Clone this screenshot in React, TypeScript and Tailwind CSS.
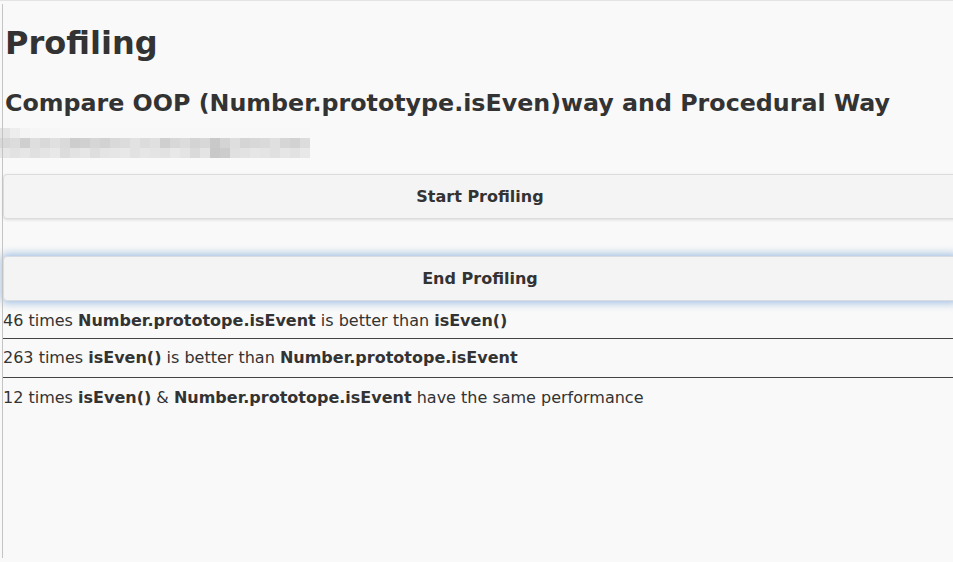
const blurRows: string[][] = [
  ["#e4e4e4", "#ededed", "#f4f4f4", "#f6f6f6", "#f7f7f7", "#f7f7f7", "#f8f8f8", "#f8f8f8", "#f8f8f8", "#f8f8f8", "#f8f8f8", "#f8f8f8", "#f8f8f8", "#f8f8f8", "#f8f8f8", "#f8f8f8", "#f8f8f8", "#f8f8f8", "#f8f8f8", "#f8f8f8", "#f8f8f8", "#f8f8f8", "#f8f8f8", "#f8f8f8", "#f8f8f8", "#f8f8f8", "#f8f8f8", "#f8f8f8", "#f8f8f8", "#f8f8f8", "#f8f8f8"],
  ["#d8d8d8", "#dcdcdc", "#cfcfcf", "#dedede", "#d9d9d9", "#e0e0e0", "#dadada", "#cdcdcd", "#d0d0d0", "#d6d6d6", "#d2d2d2", "#d9d9d9", "#dcdcdc", "#e2e2e2", "#dcdcdc", "#e0e0e0", "#cfcfcf", "#d8d8d8", "#dcdcdc", "#d4d4d4", "#d8d8d8", "#c9c9c9", "#d4d4d4", "#dedede", "#d5d5d5", "#d8d8d8", "#dadada", "#e0e0e0", "#d6d6d6", "#d2d2d2", "#dcdcdc"],
  ["#e6e6e6", "#e2e2e2", "#e6e6e6", "#e0e0e0", "#e4e4e4", "#e8e8e8", "#dcdcdc", "#e2e2e2", "#e6e6e6", "#dedede", "#e4e4e4", "#e6e6e6", "#e8e8e8", "#e2e2e2", "#e6e6e6", "#e4e4e4", "#e2e2e2", "#e8e8e8", "#e4e4e4", "#dadada", "#e4e4e4", "#c8c8c8", "#cccccc", "#e0e0e0", "#e2e2e2", "#e6e6e6", "#e4e4e4", "#e0e0e0", "#e6e6e6", "#e2e2e2", "#e8e8e8"],
];

export default function App() {
  return (
    <div className="relative min-h-[562px] overflow-hidden bg-[#f9f9f9] text-[#333] font-['DejaVu_Sans',sans-serif]">
      {/* window edges */}
      <div className="absolute left-[2px] top-[4px] bottom-[4px] w-px bg-[#c4c4c4]" />
      <div className="absolute left-0 right-0 top-0 h-px bg-[#e4e4e4]" />

      <h1 className="pt-[25px] pl-[5px] text-[32px] font-bold leading-[37px]">Profiling</h1>
      <h2 className="mt-[27px] pl-[5px] text-[23.75px] font-bold leading-[28px]">
        Compare OOP (Number.prototype.isEven)way and Procedural Way
      </h2>

      {/* redacted line */}
      <div className="mt-[11px] flex flex-col">
        {blurRows.map((row, r) => (
          <div key={r} className="flex h-[10px]">
            {row.map((c, i) => (
              <div key={i} className="h-full w-[10px]" style={{ backgroundColor: c }} />
            ))}
          </div>
        ))}
      </div>

      <div className="ml-[3px] mt-[16px] w-[954px]">
        <button className="h-[45px] w-full rounded-[4px] border border-[#dcdcdc] bg-[#f4f4f4] text-[16px] font-bold text-[#333] shadow-[0_1px_3px_rgba(0,0,0,0.12)]">
          Start Profiling
        </button>
        <button className="mt-[37px] h-[45px] w-full rounded-[4px] border border-[#d8dde4] bg-[#f4f4f4] text-[16px] font-bold text-[#333] shadow-[0_0_9px_2px_rgba(100,150,210,0.6)]">
          End Profiling
        </button>
      </div>

      <div className="ml-[3px] w-[954px] text-[16px]">
        <div className="flex h-[38px] items-center border-b border-[#444] pt-[2px]">
          <span>
            46 times <b>Number.prototope.isEvent</b> is better than <b>isEven()</b>
          </span>
        </div>
        <div className="flex h-[39px] items-center border-b border-[#444]">
          <span>
            263 times <b>isEven()</b> is better than <b>Number.prototope.isEvent</b>
          </span>
        </div>
        <div className="flex h-[39px] items-center">
          <span>
            12 times <b>isEven()</b> &amp; <b>Number.prototope.isEvent</b> have the same performance
          </span>
        </div>
      </div>
    </div>
  );
}
